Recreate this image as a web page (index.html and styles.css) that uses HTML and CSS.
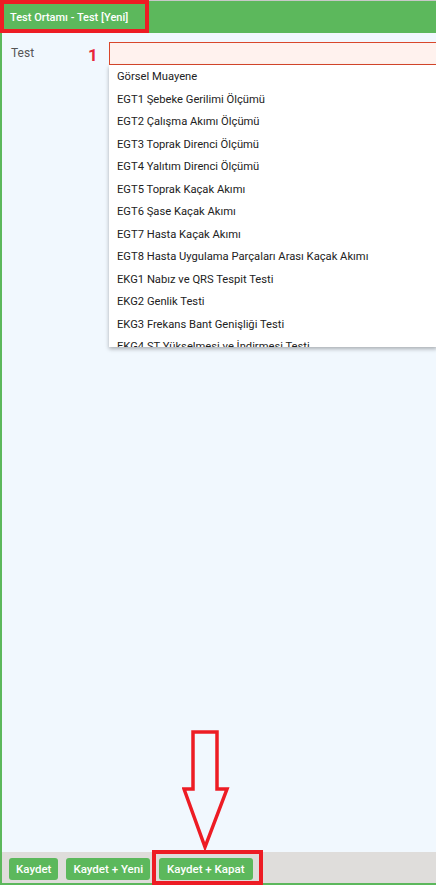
FILE: index.html
```html
<!DOCTYPE html>
<html lang="tr">
<head>
<meta charset="utf-8">
<title>Test Ortamı - Test [Yeni]</title>
<link rel="stylesheet" href="styles.css">
</head>
<body>
<div class="window">
  <header class="titlebar">
    <span class="title">Test Ortamı - Test [Yeni]</span>
  </header>
  <main class="content">
    <div class="row">
      <label class="label">Test</label>
      <span class="marker">1</span>
      <div class="field">
        <div class="input"></div>
        <ul class="dropdown">
          <li>Görsel Muayene</li>
          <li>EGT1 Şebeke Gerilimi Ölçümü</li>
          <li>EGT2 Çalışma Akımı Ölçümü</li>
          <li>EGT3 Toprak Direnci Ölçümü</li>
          <li>EGT4 Yalıtım Direnci Ölçümü</li>
          <li>EGT5 Toprak Kaçak Akımı</li>
          <li>EGT6 Şase Kaçak Akımı</li>
          <li>EGT7 Hasta Kaçak Akımı</li>
          <li>EGT8 Hasta Uygulama Parçaları Arası Kaçak Akımı</li>
          <li>EKG1 Nabız ve QRS Tespit Testi</li>
          <li>EKG2 Genlik Testi</li>
          <li>EKG3 Frekans Bant Genişliği Testi</li>
          <li>EKG4 ST Yükselmesi ve İndirmesi Testi</li>
        </ul>
      </div>
    </div>
  </main>
  <footer class="footer">
    <button class="btn">Kaydet</button>
    <button class="btn">Kaydet + Yeni</button>
    <button class="btn btn-close">Kaydet + Kapat</button>
  </footer>
</div>
<div class="note-box note-title"></div>
<div class="note-box note-btn"></div>
<svg class="note-arrow" width="50" height="120" viewBox="0 0 50 120">
  <path d="M11 2 H35 V59 H45 L23 117 L2 59 H11 Z" fill="none" stroke="#ed1c24" stroke-width="3.5" stroke-linejoin="miter"/>
</svg>
</body>
</html>
```
FILE: styles.css
```css
html, body {
  margin: 0;
  padding: 0;
  width: 436px;
  height: 886px;
  overflow: hidden;
  background: #ffffff;
  font-family: Roboto, "Liberation Sans", Arial, sans-serif;
}

.window {
  position: relative;
  height: 885px;
  display: flex;
  flex-direction: column;
  border-top: 1px solid #c8c8c8;
  box-sizing: border-box;
}

.titlebar {
  height: 32px;
  background: #5cb85c;
  display: flex;
  align-items: center;
  padding-left: 10px;
  flex: none;
}

.title {
  color: #ffffff;
  font-size: 11px;
  font-weight: 500;
  padding-top: 1px;
}

.content {
  flex: 1;
  background: #f1f8fe;
  border-left: 2px solid #5cb85c;
  padding: 9px 0 0 9px;
  overflow: hidden;
}

.row {
  display: flex;
  align-items: flex-start;
}

.label {
  flex: none;
  width: 75px;
  font-size: 12px;
  color: #555555;
  line-height: 22px;
}

.marker {
  flex: none;
  width: 23px;
  color: #e8263b;
  font-size: 17px;
  font-weight: 700;
  line-height: 26px;
  padding-left: 2px;
  box-sizing: border-box;
}

.field {
  flex: none;
  position: relative;
  width: 328px;
}

.input {
  height: 21px;
  border: 1px solid #d9472b;
  border-right: none;
  background: #fff2ee;
}

.dropdown {
  position: absolute;
  left: 0;
  top: 23px;
  width: 328px;
  height: 282px;
  margin: 0;
  padding: 1px 0 0 0;
  box-sizing: border-box;
  list-style: none;
  background: #ffffff;
  box-shadow: 0 2px 4px rgba(0, 0, 0, 0.3);
  overflow: hidden;
  z-index: 2;
}

.dropdown li {
  height: 22.5px;
  line-height: 22.5px;
  padding-left: 8px;
  font-size: 11.2px;
  color: #222222;
  white-space: nowrap;
}

.footer {
  flex: none;
  height: 31px;
  background: #dfdddb;
  border-left: 2px solid #5cb85c;
  border-bottom: 2px solid #5cb85c;
  display: flex;
  align-items: center;
  gap: 8px;
  padding-left: 7px;
}

.btn {
  height: 22px;
  border: none;
  border-radius: 3px;
  background: #5cb85c;
  color: #ffffff;
  font-family: Roboto, "Liberation Sans", Arial, sans-serif;
  font-size: 11.5px;
  font-weight: 500;
  padding: 0 7px;
  margin-top: 2px;
}

.btn-close {
  margin-left: 1px;
  padding: 0 8px;
}

.note-box {
  position: absolute;
  border: 4px solid #ed1c24;
  box-sizing: border-box;
  pointer-events: none;
}

.note-title {
  left: 0;
  top: 0;
  width: 149px;
  height: 33px;
}

.note-btn {
  left: 152px;
  top: 850px;
  width: 111px;
  height: 35px;
}

.note-arrow {
  position: absolute;
  left: 182px;
  top: 730px;
}
```
